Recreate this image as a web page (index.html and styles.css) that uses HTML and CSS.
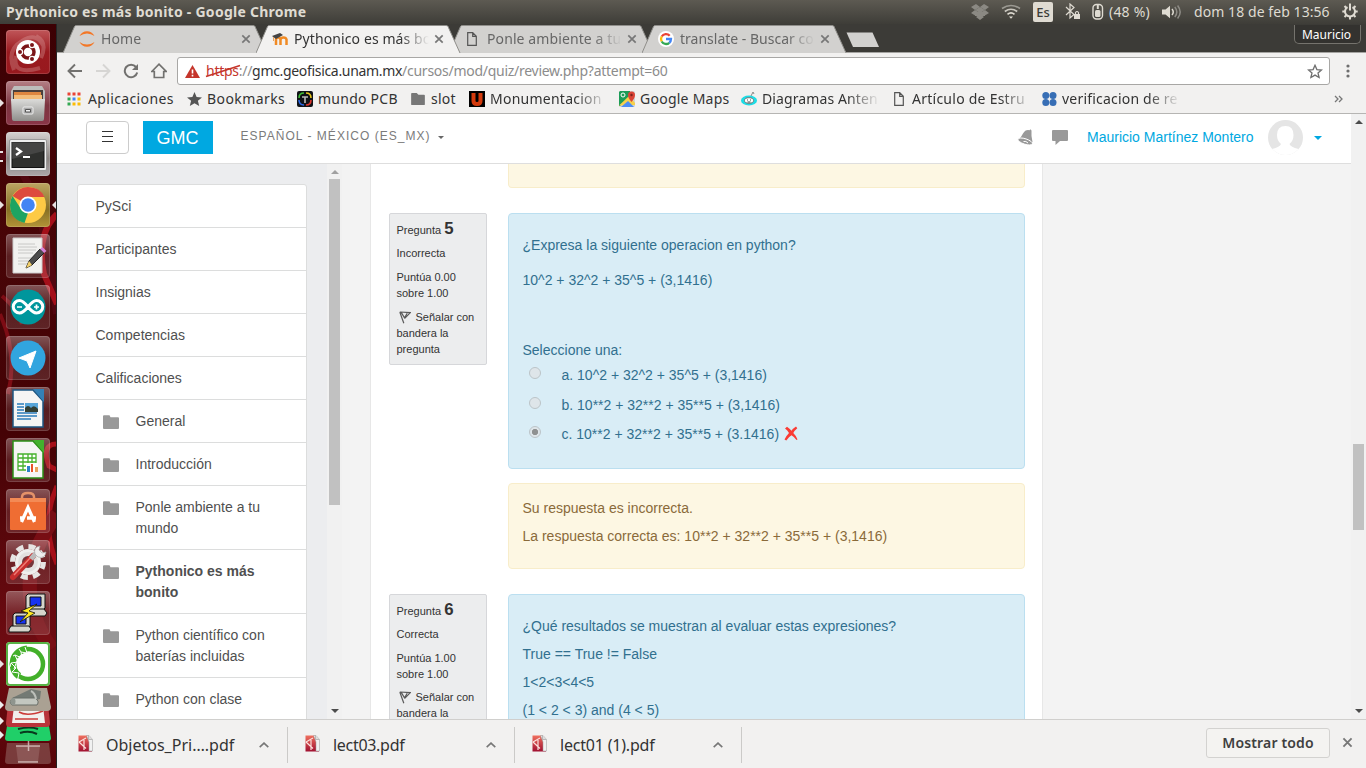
FILE: index.html
```html
<!DOCTYPE html>
<html lang="es">
<head>
<meta charset="utf-8">
<title>Pythonico es más bonito</title>
<link rel="stylesheet" href="styles.css">
</head>
<body>
<svg class="defs" width="0" height="0">
  <defs>
    <linearGradient id="metal" x1="0" y1="0" x2="0" y2="1"><stop offset="0" stop-color="#dcdcda"/><stop offset="1" stop-color="#8f8f8c"/></linearGradient>
    <linearGradient id="pdfred" x1="0" y1="0" x2="0" y2="1"><stop offset="0" stop-color="#f0705f"/><stop offset="1" stop-color="#a01030"/></linearGradient>
    <symbol id="close" viewBox="0 0 10 10"><path d="M1.3 1.3l7.4 7.4M8.7 1.3L1.300 8.700" stroke="currentColor" stroke-width="1.7"/></symbol>
    <symbol id="page" viewBox="0 0 10 14"><path d="M.7.7h5l3.600 3.600v9H.7zM5.700.7v3.600h3.600" fill="none" stroke="#555" stroke-width="1.200"/></symbol>
    <symbol id="folder" viewBox="0 0 16 14"><path d="M0 1.200Q0 .2 1 .2h5.500l1 2h7.500q1 0 1 1v9.800q0 1-1 1H1q-1 0-1-1z" fill="#999"/></symbol>
    <symbol id="chev" viewBox="0 0 10 6"><path d="M.7 5.200L5 1.100l4.300 4.100" fill="none" stroke="#777" stroke-width="1.600"/></symbol>
    <symbol id="pdf" viewBox="0 0 15 17"><path d="M.5.500h9.500l4 4v12H.5z" fill="url(#pdfred)"/><path d="M8.500.500h2.500l3.500 4v11.500H11V7z" fill="#f1f1f1" stroke="#999" stroke-width=".5"/><path d="M10.500.700v3.800h3.800" fill="#ddd" stroke="#888" stroke-width=".5"/><path d="M1 7L8 3M1 7l7 6.500M6 5v10" fill="none" stroke="#fbe0dc" stroke-width="1.200"/></symbol>
    <symbol id="flag" viewBox="0 0 12 13"><path d="M.8 1l4 11.200M.8 1L11.300 1.600 5.700 7.300M2.200 1.400L5.500 6.800 8.200 2.200" fill="none" stroke="#5a5a5a" stroke-width="1.200"/></symbol>
    <symbol id="tabshape" viewBox="0 0 205 28"><path d="M0 28L11.500 1.500Q12 .5 13.500.5h176.500q1.500 0 2 1L204 28z" fill="currentColor"/><path d="M0 28L11.500 1.500Q12 .5 13.500.5h176.500q1.500 0 2 1L204 28" fill="none" stroke="#8f8e8a" stroke-width="1"/></symbol>
  </defs>
</svg>

<header class="panel">
  <span class="panel-title">Pythonico es más bonito - Google Chrome</span>
  <div class="indicators">
    <svg class="ind-drop" width="18" height="16" viewBox="0 0 18 16" fill="#8b8983"><path d="M5 0l4 3-5 3-4-3zM13 0l5 3-4 3-5-3zM4 6l5 3-4 3-5-3zM14 6l4 3-5 3-4-3zM9 10l4 3-4 3-4-3z"/><path d="M4 6l5-3 5 3-5 3z"/><path d="M4 8h10v4H4z"/></svg>
    <svg class="ind-wifi" width="20" height="15" viewBox="0 0 20 15" fill="none" stroke-width="1.700"><path d="M1 4.500Q10-1.500 19 4.500" stroke="#9b9992"/><path d="M3.800 7.500Q10 3 16.200 7.500" stroke="#c9c6be"/><path d="M6.500 10.300Q10 7.500 13.500 10.300" stroke="#dfdbd2"/><path d="M8 12.500h4L10 14.800z" fill="#dfdbd2"/></svg>
    <span class="ind-lang">Es</span>
    <svg class="ind-bt" width="16" height="17" viewBox="0 0 16 17"><path d="M1 4l8 7.500-4 3.500V1l4 3.500L1 12" fill="none" stroke="#dfdbd2" stroke-width="1.200"/><path d="M9 11h6v5H9z" fill="#dfdbd2"/><path d="M10.500 11V9.500q1.500-2 3 0V11" fill="none" stroke="#dfdbd2" stroke-width="1.200"/></svg>
    <svg class="ind-bat" width="12" height="17" viewBox="0 0 12 17"><rect x="1" y="1.500" width="9.500" height="14.500" rx="3.500" fill="none" stroke="#dfdbd2" stroke-width="1.400"/><rect x="3" y="7" width="5.500" height="7" rx="1.500" fill="#dfdbd2"/><path d="M5.800 2v4" stroke="#dfdbd2" stroke-width="2"/></svg>
    <span class="ind-pct">(48 %)</span>
    <svg class="ind-vol" width="20" height="14" viewBox="0 0 20 14"><path d="M0 4.500h3.500L8 .8v12.400L3.500 9.500H0z" fill="#dfdbd2"/><path d="M10 4q2.500 3 0 6" fill="none" stroke="#dfdbd2" stroke-width="1.500"/><path d="M12.800 2q4 5 0 10M15.600.5q5.200 6.500 0 13" fill="none" stroke="#8e8c86" stroke-width="1.500"/></svg>
    <span class="ind-date">dom 18 de feb 13:56</span>
    <svg class="ind-gear" width="16" height="17" viewBox="0 0 16 17" fill="none" stroke="#dfdbd2"><path d="M5.500 4.200a5 5 0 1 0 5 0" stroke-width="2"/><path d="M8 .5v7M.3 8.500h3M12.700 8.500h3M2.500 3l2.200 2.200M13.500 3l-2.200 2.200M2.500 14l2-2M13.500 14l-2-2M8 13.500v3" stroke-width="2"/></svg>
  </div>
</header>

<div class="desktop">
  <nav class="launcher">
    <svg class="wall" width="57" height="744" viewBox="0 0 57 744"><g fill="none" stroke="#a50f18"><path d="M0 130Q40 140 57 290" stroke="#520710" stroke-width="8"/><path d="M57 190Q36 210 44 250L57 280" stroke="#a30f19" stroke-width="6"/><path d="M0 290Q18 330 8 370M2 272Q18 285 22 300" stroke="#7d0c14" stroke-width="4"/><path d="M57 420q-16 0-8 22l8 4M57 462Q40 500 57 540" stroke-width="5"/><path d="M57 490Q5 560 52 625" stroke="#780e14" stroke-width="14"/></g></svg>
    <div class="tile t-ubuntu"><svg viewBox="0 0 44 44"><path d="M8 40Q0 20 16 11Q30 2 37 15M10 26Q6 46 34 38M35 28Q42 12 30 6" fill="none" stroke="#e6b3b3" stroke-opacity=".3" stroke-width="4"/><circle cx="22" cy="22" r="12" fill="#fff"/><circle cx="22" cy="22" r="6" fill="none" stroke="#7b1518" stroke-width="3.500"/><g fill="#7b1518" stroke="#fff" stroke-width="1.200"><circle cx="14" cy="22" r="2.600"/><circle cx="26" cy="15" r="2.600"/><circle cx="26" cy="29" r="2.600"/></g></svg></div>
    <div class="tile t-files pip"><svg viewBox="0 0 44 44"><path d="M8 5h28l3 5v10H5V10z" fill="#bdbdbb"/><path d="M7 9h30v10H7z" fill="#4a403c"/><path d="M8 11h27v8H8z" fill="#de8740"/><path d="M8 14h28v5H8z" fill="#f3bd79"/><path d="M5 18h34l-1 20q0 2-2 2H8q-2 0-2-2z" fill="url(#metal)"/><rect x="17" y="26" width="10" height="7" rx="1" fill="#aaa" stroke="#eee"/><path d="M19.500 28.500h5v2.500h-5z" fill="#eee" stroke="#555"/></svg></div>
    <div class="tile t-term pip two"><svg viewBox="0 0 44 44"><rect x="3.500" y="7.500" width="37" height="31" rx="1.500" fill="#eee" stroke="#999"/><rect x="6" y="10.500" width="32" height="25" fill="#2f302e" stroke="#111"/><path d="M6 10h32v9L6 27z" fill="#666" opacity=".4"/><path d="M10 16l5 3.500-5 3.500M17 25h7" fill="none" stroke="#fff" stroke-width="2.200"/></svg></div>
    <div class="tile t-chrome pip"><svg viewBox="0 0 44 44"><circle cx="22" cy="22" r="18" fill="#fdca45"/><path d="M22 22L6.500 13Q13 4 22 4q12 0 16.500 10H22z" fill="#dd4b3e"/><path d="M6.500 13L15 26l7 4-3.500 10Q4 36 4 22q0-5 2.500-9z" fill="#1da462"/><circle cx="22" cy="22" r="8.500" fill="#fff"/><circle cx="22" cy="22" r="6.800" fill="#4285f4"/></svg></div>
    <div class="tile"><svg viewBox="0 0 44 44"><path d="M7 4h29v35H7z" fill="#f1f1ef" stroke="#ccc"/><path d="M12 10h17M12 13h19M12 16h18M12 19h15M12 24h17M12 27h14M12 30h12" stroke="#c8c8c6"/><path d="M23 27L34 15l4 4-12 12-6 3z" fill="#4c4c4c" stroke="#222"/><path d="M34 15l2.500-2 4 4-2.500 2z" fill="#d584d8"/><path d="M20 34l3-7 3 4z" fill="#f3d06a"/></svg></div>
    <div class="tile"><svg viewBox="0 0 44 44"><circle cx="22" cy="22" r="17.500" fill="#00969c"/><path d="M22 22Q17 15.500 13.500 15.500a6 6 0 0 0 0 12.500Q17 28 22 22Q27 15.500 30.500 15.500a6 6 0 0 1 0 12.500Q27 28 22 22z" fill="none" stroke="#fff" stroke-width="3"/><path d="M11 22h5M28 22h5M30.500 19.500v5" stroke="#fff" stroke-width="1.700"/></svg></div>
    <div class="tile"><svg viewBox="0 0 44 44"><circle cx="22" cy="22" r="17.500" fill="#31a5df"/><path d="M13 22l17-7-6 17-3-7z" fill="#fff" stroke="#fff" stroke-linejoin="round"/></svg></div>
    <div class="tile"><svg viewBox="0 0 44 44"><path d="M7 3h20l10 11v26H7z" fill="#f5f5f4" stroke="#1d5783" stroke-width="1.500"/><path d="M27 2h11v13z" fill="#3380b6"/><path d="M11 17h7M11 20h7M11 23h7M11 26h20M11 29h20M11 32h14" stroke="#2a7cbb" stroke-width="1.500"/><path d="M19 16h13v9H19z" fill="#57a5d8"/><path d="M19 25v-4q3-4 6 0 3-4 7 1v3z" fill="#333f33"/></svg></div>
    <div class="tile"><svg viewBox="0 0 44 44"><path d="M7 3h20l10 11v26H7z" fill="#f5f5f4" stroke="#2b9016" stroke-width="1.500"/><path d="M27 2h11v13z" fill="#43b12d"/><path d="M12 16h18v16H12zM12 20h18M12 24h18M12 28h18M17 16v16M22 16v16M26 16v16" fill="#fff" stroke="#45b12d" stroke-width="1.300"/><path d="M20 25h12v9H20z" fill="#fff"/><path d="M21 34v-6h3v6z" fill="#2b82c9"/><path d="M25 34v-8h2v8z" fill="#e8542b"/><path d="M29 34v-5h3v5z" fill="#e9a35d"/></svg></div>
    <div class="tile"><svg viewBox="0 0 44 44"><path d="M16 13V8q0-4 6-4t6 4v5" fill="none" stroke="#e49169" stroke-width="2.500"/><path d="M4 9h36v31q0 1-1 1H5q-1 0-1-1z" fill="#ef6d33"/><path d="M4 9h36v4H4z" fill="#f38a55"/><path d="M15.500 33L22 18.500 28.500 33M14 29h4.500M21 29h9" fill="none" stroke="#fff" stroke-width="3.300"/></svg></div>
    <div class="tile"><svg viewBox="0 0 44 44"><circle cx="22" cy="22" r="15.500" fill="none" stroke="#e6e5e3" stroke-width="5" stroke-dasharray="7 5.170"/><circle cx="22" cy="22" r="11.500" fill="#e2e1df" stroke="#efefed" stroke-width="3"/><circle cx="22" cy="22" r="6" fill="#76363a"/><path d="M7 37L27 16" stroke="#c62d2d" stroke-width="6" stroke-linecap="round"/><path d="M8 35L26 16" stroke="#ee7b74" stroke-width="1.500"/><path d="M25 19l5-6" stroke="#bbb" stroke-width="5"/><path d="M29 14q-2-7 5-8l-1 4 3 3 4-1q-1 7-8 5z" fill="#eee" stroke="#aaa" stroke-width=".7"/></svg></div>
    <div class="tile"><svg viewBox="0 0 44 44"><g fill="#d5d5cc" stroke="#111"><path d="M20 5l2-2h17v14l-2 2H20z"/><path d="M19 18h19l3 4-2 3H19z"/><path d="M7 24l2-2h15v13l-2 2H7z"/><path d="M5 35h18l2 3-2 3H3v-3z"/></g><path d="M24 6h11v9H24zM10 25h10v8H10z" fill="#1733f0" stroke="#111"/><path d="M31 13l-16 7 7 2-8 9 15-9-6-2z" fill="#ffe920" stroke="#111" stroke-width=".8"/></svg></div>
    <div class="tile t-white pip"><svg viewBox="0 0 44 44"><circle cx="22" cy="22" r="15" fill="none" stroke="#43b02a" stroke-width="4.500"/><path d="M21 7A15 15 0 0 0 13 34" fill="none" stroke="#43b02a" stroke-width="7"/><path d="M19 5l2 6-6-1 1 6-7-3 3 7-7 1 5 5-4 4 7 1-1 5M13 7l2 3M7 14l2-1M5 21l-1 4M12 16l-4 11" fill="none" stroke="#fff" stroke-width="1"/></svg></div>
    <svg class="folded" width="57" height="82" viewBox="0 0 57 82"><path d="M7 57h42l2 18q0 3-3 3H8q-3 0-3-3z" fill="#8c5b58" opacity=".65"/><path d="M16 60h24l-2 16H18z" fill="#d6bdb8" opacity=".2"/><path d="M16 60h24M18 76h20M28.500 55v10" fill="none" stroke="#f5e7e3" stroke-width="1.500" opacity=".65"/><path d="M8 34h40l3 18q0 3-3 3H8q-3 0-3-3z" fill="#20cf68"/><path d="M18 43q12-3 20 0M20 47q9-3 17 1" fill="none" stroke="#08391e" stroke-width="2"/><path d="M8 18h40l2 19q0 4-3 4H9q-3 0-3-4z" fill="#b9343b"/><path d="M14 20h29l2 17H12z" fill="#f1efed"/><path d="M19 26q8 5 24-1M15 33h23" fill="none" stroke="#cc3c39" stroke-width="1.500"/><path d="M9 2h38l4 19q0 4-4 4H9q-4 0-4-4z" fill="#aaa193"/><path d="M12 12L31 3l10 2-1 8-18 5-9-1z" fill="#737a74"/><path d="M13 12h22q5 3 2 7H12q-4-3 1-7z" fill="#c3c7c0" stroke="#686e68"/><ellipse cx="13" cy="15.500" rx="2.500" ry="3.500" fill="#8f958e"/><path d="M31 5q4 2 5 8" fill="none" stroke="#bcc0ba" stroke-width="2"/><g fill="#eee"><path d="M0 15l4 4-4 4zM0 31l4 4-4 4zM0 45l4 4-4 4z"/></g></svg>
  </nav>

  <main class="window">
    <div class="tabstrip">
      <div class="tab"><svg class="shape" width="205" height="28"><use href="#tabshape"/></svg>
        <svg class="fav" width="16" height="16" viewBox="0 0 16 16" fill="#f37726"><path d="M.5 5Q3 .2 8 .2T15.500 5Q12 2.500 8 2.500T.5 5zM.5 11Q3 15.800 8 15.800T15.500 11Q12 13.500 8 13.500T.5 11z"/></svg><span class="tab-title">Home</span><svg class="tab-x" width="10" height="10"><use href="#close"/></svg></div>
      <div class="tab active"><svg class="shape" width="205" height="28"><use href="#tabshape"/></svg>
        <svg class="fav" width="16" height="16" viewBox="0 0 16 16"><path d="M4 14V8.500q0-2 2-2t2.500 2V14M8.500 14V8.500q.5-2 3-2t3 2V14" fill="none" stroke="#f08a24" stroke-width="2.500"/><path d="M0 5l8-3 3 2-7 4z" fill="#444"/><path d="M1.500 6v4" stroke="#e9a25c"/></svg><span class="tab-title t2">Pythonico es más bo</span><svg class="tab-x" width="10" height="10"><use href="#close"/></svg></div>
      <div class="tab"><svg class="shape" width="205" height="28"><use href="#tabshape"/></svg>
        <svg class="fav" width="16" height="14"><use href="#page" width="10" height="14" x="2"/></svg><span class="tab-title t3">Ponle ambiente a tu</span><svg class="tab-x" width="10" height="10"><use href="#close"/></svg></div>
      <div class="tab"><svg class="shape" width="205" height="28"><use href="#tabshape"/></svg>
        <svg class="fav" width="16" height="16" viewBox="0 0 16 16"><circle cx="8" cy="8" r="8" fill="#fff"/><g fill="none" stroke-width="2.300"><path d="M11.700 4.700A5 5 0 0 0 3.700 5.500" stroke="#ea4335"/><path d="M3.700 5.500a5 5 0 0 0 0 5" stroke="#fbbc05"/><path d="M3.700 10.500a5 5 0 0 0 7.600 1.300" stroke="#34a853"/><path d="M11.300 11.800Q13 10.300 13 8H8" stroke="#4285f4"/></g></svg><span class="tab-title t4">translate - Buscar co</span><svg class="tab-x" width="10" height="10"><use href="#close"/></svg></div>
      <svg class="newtab" width="34" height="16" viewBox="0 0 34 16"><path d="M.5.500h26l6.500 14.500H7z" fill="#d2d1cf"/></svg>
      <span class="user-tag">Mauricio</span>
    </div>

    <div class="toolbar">
      <svg class="nav" width="16" height="16" viewBox="0 0 16 16"><path d="M15 8H2M8 1.500L1.500 8 8 14.500" fill="none" stroke="#72716f" stroke-width="1.900"/></svg>
      <svg class="nav" width="16" height="16" viewBox="0 0 16 16"><path d="M1 8h13M8 1.500L14.500 8 8 14.500" fill="none" stroke="#d6d5d3" stroke-width="1.900"/></svg>
      <svg class="nav" width="16" height="16" viewBox="0 0 16 16"><path d="M13 4A6.300 6.300 0 1 0 14.200 9.500" fill="none" stroke="#72716f" stroke-width="2"/><path d="M15 1v6H9z" fill="#72716f"/></svg>
      <svg class="nav" width="16" height="16" viewBox="0 0 16 16"><path d="M.8 8.500L8 1.200l7.200 7.300h-2.500v6H3.300v-6z" fill="none" stroke="#72716f" stroke-width="1.700"/></svg>
      <div class="omnibox">
        <svg width="15" height="13" viewBox="0 0 15 13"><path d="M7.500 0L15 13H0z" fill="#c5352b"/><path d="M7.500 4.500v4M7.500 9.700v1.700" stroke="#fff" stroke-width="1.600"/></svg>
        <span class="scheme">https<svg class="strike" width="36" height="14" viewBox="0 0 36 14"><path d="M1 12.500L35 1.500" stroke="#c5352b" stroke-width="1.600"/></svg></span><span class="slashes">://</span><span class="host">gmc.geofisica.unam.mx</span><span class="path">/cursos/mod/quiz/review.php?attempt=60</span>
        <svg class="star" width="16" height="15" viewBox="0 0 16 15"><path d="M8 1.300l1.900 4.300 4.600.4-3.500 3 1.100 4.500L8 11.100l-4.100 2.400L5 9 1.500 6l4.600-.4z" fill="none" stroke="#6e6e6e" stroke-width="1.300"/></svg>
      </div>
      <svg class="menu" width="4" height="14" viewBox="0 0 4 14" fill="#6e6e6e"><circle cx="2" cy="2" r="1.600"/><circle cx="2" cy="7" r="1.600"/><circle cx="2" cy="12" r="1.600"/></svg>
    </div>

    <div class="bookmarks">
      <div class="bm b1"><svg width="14" height="14" viewBox="0 0 14 14"><path d="M.5.500h3v3h-3zM5.500.500h3v3h-3zM10.500.500h3v3h-3z" fill="#ea4335"/><path d="M.5 5.500h3v3h-3z" fill="#34a853"/><path d="M5.500 5.500h3v3h-3z" fill="#4285f4"/><path d="M10.500 5.500h3v3h-3z" fill="#fbbc05"/><path d="M.5 10.500h3v3h-3z" fill="#34a853"/><path d="M5.500 10.500h3v3h-3zM10.500 10.500h3v3h-3z" fill="#fbbc05"/></svg><span>Aplicaciones</span></div>
      <div class="bm b2"><svg width="15" height="14" viewBox="0 0 15 14"><path d="M7.500 0l2.100 5 5.400.4-4.100 3.400 1.300 5.200-4.700-2.800L2.800 14l1.300-5.200L0 5.400 5.400 5z" fill="#555"/></svg><span>Bookmarks</span></div>
      <div class="bm b3"><svg width="16" height="16" viewBox="0 0 16 16"><rect width="16" height="16" rx="2" fill="#101216"/><g fill="none" stroke-width="1.600"><path d="M2 7Q2 2 7 2" stroke="#3fbd36"/><path d="M9 2q5 0 5 5" stroke="#e9c61d"/><path d="M14 9q0 5-5 5" stroke="#df372e"/><path d="M7 14q-5 0-5-5" stroke="#2a68e8"/></g><path d="M5 6h6M8 6v6" stroke="#bbb" stroke-width="1.600"/></svg><span>mundo PCB</span></div>
      <div class="bm b4"><svg width="14" height="12" viewBox="0 0 16 14"><path d="M0 1q0-1 1-1h5.500l2 2H15q1 0 1 1v10q0 1-1 1H1q-1 0-1-1z" fill="#777"/></svg><span>slot</span></div>
      <div class="bm b5 fade"><svg width="16" height="16" viewBox="0 0 16 16"><path d="M0 0h16v16H0z" fill="#000"/><path d="M4.500 2v8q0 3 3.500 3t3.500-3V2" fill="none" stroke="#d33a0c" stroke-width="4"/></svg><span>Monumentacion</span></div>
      <div class="bm b6"><svg width="16" height="16" viewBox="0 0 16 16"><rect width="16" height="16" rx="1.500" fill="#d4d4d4"/><path d="M1 0h10v6L1 15H0V1z" fill="#1c9c57"/><path d="M0 14.500L10 5l6 7v2z" fill="#f7d04a"/><path d="M2 16l7-6 6 6z" fill="#4b8df5"/><circle cx="4" cy="4" r="2" fill="none" stroke="#fff"/><path d="M9 4a3.500 3.500 0 0 1 7 0q0 3-3.500 7Q9 7 9 4z" fill="#db4437"/><circle cx="12.500" cy="4" r="1.200" fill="#7b231e"/></svg><span>Google Maps</span></div>
      <div class="bm b7 fade"><svg width="16" height="16" viewBox="0 0 16 16"><ellipse cx="8" cy="9.500" rx="8" ry="5" fill="#1ddce5"/><ellipse cx="8" cy="9.500" rx="4.500" ry="2.800" fill="#fff" stroke="#777"/><path d="M6 9h1M9 9h1M6.500 11h3" stroke="#444"/><path d="M10 5l2-4 1 2" fill="none" stroke="#888"/></svg><span>Diagramas Anten</span></div>
      <div class="bm b8 fade"><svg width="10" height="14"><use href="#page"/></svg><span>Artículo de Estru</span></div>
      <div class="bm b9 fade"><svg width="15" height="14" viewBox="0 0 15 14" fill="#376eb5"><circle cx="3.800" cy="3.600" r="3.500"/><circle cx="11" cy="3.600" r="3.500"/><circle cx="3.800" cy="10.400" r="3.500"/><circle cx="11" cy="10.400" r="3.500"/></svg><span>verificacion de re</span></div>
      <svg class="more" width="9" height="8" viewBox="0 0 9 8"><path d="M1 1l3 3-3 3M5 1l3 3-3 3" fill="none" stroke="#777" stroke-width="1.300"/></svg>
    </div>

    <div class="viewport">
      <div class="site">
        <div class="site-head">
          <div class="burger"><i></i><i></i><i></i></div>
          <div class="brand">GMC</div>
          <div class="lang">ESPAÑOL - MÉXICO (ES_MX)<b class="caret"></b></div>
          <svg class="bell" width="17" height="17" viewBox="0 0 17 17"><path d="M.8 10.800Q5 7.500 6 4.500 8.500.2 12.500 1.200l.8-.9 1.200 1.300q-.5 5 1 11.400-7 3-14.700-2.200z" fill="#999"/><ellipse cx="8.200" cy="12.500" rx="7.600" ry="2.700" transform="rotate(18 8.200 12.500)" fill="#999" stroke="#fff" stroke-width=".9"/><path d="M6.500 12.500q2.500-.8 4.500 1.500" stroke="#fff" fill="none"/></svg>
          <svg class="chat" width="16" height="15" viewBox="0 0 16 15"><path d="M1 0h14q1 0 1 1v9q0 1-1 1H8l-4.500 4V11H1q-1 0-1-1V1q0-1 1-1z" fill="#999"/></svg>
          <span class="who">Mauricio Martínez Montero</span>
          <svg class="avatar" width="35" height="35" viewBox="0 0 35 35"><clipPath id="av"><circle cx="17.500" cy="17.500" r="17.500"/></clipPath><g clip-path="url(#av)"><path d="M0 0h35v35H0z" fill="#e5e5e5"/><path d="M17.500 6q8 0 8 9 0 6-4 9 1 3 9 5v7H4v-7q8-2 9-5-4-3-4-9 0-9 8.500-9z" fill="#fff"/></g></svg>
          <b class="caret blue"></b>
        </div>
        <div class="site-body">
          <aside class="drawer">
            <ul class="list">
              <li>PySci</li><li>Participantes</li><li>Insignias</li><li>Competencias</li><li>Calificaciones</li>
              <li class="sub"><svg width="16" height="14"><use href="#folder"/></svg><span>General</span></li>
              <li class="sub"><svg width="16" height="14"><use href="#folder"/></svg><span>Introducción</span></li>
              <li class="sub"><svg width="16" height="14"><use href="#folder"/></svg><span>Ponle ambiente a tu mundo</span></li>
              <li class="sub current"><svg width="16" height="14"><use href="#folder"/></svg><span>Pythonico es más bonito</span></li>
              <li class="sub"><svg width="16" height="14"><use href="#folder"/></svg><span>Python científico con baterías incluidas</span></li>
              <li class="sub"><svg width="16" height="14"><use href="#folder"/></svg><span>Python con clase</span></li>
            </ul>
          </aside>
          <div class="sbar inner"><b class="up dim"></b><div class="thumb"></div><b class="down"></b></div>
          <section class="quiz">
            <div class="outcome tail"></div>
            <article class="que">
              <div class="info"><h3>Pregunta <b>5</b></h3><p>Incorrecta</p><p>Puntúa 0.00 sobre 1.00</p><p><svg class="flag" width="12" height="13"><use href="#flag"/></svg>Señalar con bandera la pregunta</p></div>
              <div class="content">
                <div class="formulation f5">
                  <p>¿Expresa la siguiente operacion en python?</p><p>10^2 + 32^2 + 35^5 + (3,1416)</p><p>&nbsp;</p>
                  <div class="prompt">Seleccione una:</div>
                  <div class="answer"><i class="radio"></i><span>a. 10^2 + 32^2 + 35^5 + (3,1416)</span></div>
                  <div class="answer"><i class="radio"></i><span>b. 10**2 + 32**2 + 35**5 + (3,1416)</span></div>
                  <div class="answer"><i class="radio on"></i><span>c. 10**2 + 32**2 + 35**5 + (3.1416)</span><svg class="wrong" width="14" height="15" viewBox="0 0 14 15"><path d="M1 2.500L3 .8q3 2.200 4.500 4Q9 2.500 12 .6l1.300 1.600Q10.500 4.500 9.300 7q2.700 2.500 4.200 6.500l-1 .5q-2-3-5-4.800Q4.500 11 2.300 14.400L.5 13.500Q2.500 9.500 5 7 3.500 4 1 2.500z" fill="#fa3b34"/></svg></div>
                </div>
                <div class="outcome"><div>Su respuesta es incorrecta.</div><div>La respuesta correcta es: 10**2 + 32**2 + 35**5 + (3,1416)</div></div>
              </div>
            </article>
            <article class="que">
              <div class="info"><h3>Pregunta <b>6</b></h3><p>Correcta</p><p>Puntúa 1.00 sobre 1.00</p><p class="tight"><svg class="flag" width="12" height="13"><use href="#flag"/></svg>Señalar con bandera la pregunta</p></div>
              <div class="content">
                <div class="formulation f6"><p>¿Qué resultados se muestran al evaluar estas expresiones?</p><p>True == True != False</p><p>1&lt;2&lt;3&lt;4&lt;5</p><p>(1 &lt; 2 &lt; 3) and (4 &lt; 5)</p></div>
              </div>
            </article>
          </section>
        </div>
      </div>
      <div class="sbar outer"><b class="up"></b><div class="thumb"></div><b class="down"></b></div>
    </div>

    <footer class="downloads">
      <div class="dl"><svg width="15" height="17"><use href="#pdf"/></svg><span class="d1">Objetos_Pri….pdf</span><svg class="chev" width="10" height="6"><use href="#chev"/></svg></div>
      <div class="dl"><svg width="15" height="17"><use href="#pdf"/></svg><span class="d2">lect03.pdf</span><svg class="chev" width="10" height="6"><use href="#chev"/></svg></div>
      <div class="dl"><svg width="15" height="17"><use href="#pdf"/></svg><span class="d3">lect01 (1).pdf</span><svg class="chev" width="10" height="6"><use href="#chev"/></svg></div>
      <button class="showall">Mostrar todo</button>
      <svg class="bar-x" width="11" height="11" viewBox="0 0 10 10"><use href="#close"/></svg>
    </footer>
  </main>
</div>
</body>
</html>
```
FILE: styles.css
```css
* { box-sizing: border-box; margin: 0; padding: 0; }
body { width: 1366px; height: 768px; overflow: hidden; display: flex; flex-direction: column; font-family: "Noto Sans", "Open Sans", sans-serif; font-size: 14px; color: #333; background: #3c3b37; }
svg { flex: none; display: block; }
.defs { position: absolute; }

/* top panel */
.panel { height: 24px; flex: none; display: flex; align-items: center; justify-content: space-between; padding: 0 8px 1px 6px; background: linear-gradient(#5d5a52, #3e3d38); color: #dfdbd2; white-space: nowrap; }
.panel-title { font-weight: 700; font-size: 14px; letter-spacing: .26px; }
.indicators { display: flex; align-items: center; width: 387px; font-size: 14px; }
.ind-wifi { margin-left: 12px; }
.ind-lang { margin-left: 12px; width: 20px; height: 20px; border-radius: 2px; background: #dfdbd2; color: #3c3b37; font-size: 13px; font-weight: 500; line-height: 20px; text-align: center; }
.ind-bt { margin-left: 12px; }
.ind-bat { margin-left: 11px; }
.ind-pct { margin-left: 5px; width: 42px; letter-spacing: .2px; }
.ind-vol { margin-left: 11px; }
.ind-date { margin-left: 12px; width: 136px; letter-spacing: .07px; }
.ind-gear { margin-left: 12px; }

.desktop { flex: 1; display: flex; min-height: 0; }

/* launcher */
.launcher { position: relative; width: 57px; flex: none; padding: 6px 0 0 6px; display: flex; flex-direction: column; gap: 7px; background: linear-gradient(#3c0003, #480507 30%, #440205 55%, #700c12 85%, #560408); border-right: 1px solid #242424; overflow: hidden; }
.wall { position: absolute; left: 0; top: 0; }
.tile { position: relative; flex: none; width: 44px; height: 44px; border-radius: 4px; background: linear-gradient(rgba(255,255,255,.32), rgba(255,255,255,.1) 50%, rgba(255,255,255,.13)); box-shadow: inset 0 0 0 1px rgba(255,255,255,.14); }
.tile svg { width: 44px; height: 44px; }
.t-ubuntu { background: linear-gradient(#c05659, #9a1a1f 50%, #98191e); }
.t-files { background: linear-gradient(#b58086, #7c3440 55%, #8a3547); }
.t-term { background: linear-gradient(#d5d2d1, #8b8481 60%, #aca6a8); }
.t-chrome { background: linear-gradient(#bca562, #877025 60%, #b29437); }
.t-white { background: #fff; box-shadow: inset 0 0 0 2px #58b346; }
.pip::before { content: ""; position: absolute; left: -6px; top: 18px; border: 4px solid transparent; border-left-color: #e8e2e2; border-right: 0; }
.pip.two::before { width: 3px; height: 7px; top: 19px; border: solid #e8e2e2; border-width: 2px 0; }
.t-chrome::after { content: ""; position: absolute; right: -6px; top: 18px; border: 4px solid transparent; border-right-color: #e8e2e2; border-left: 0; }
.folded { position: relative; margin: -7px 0 0 -6px; }

/* browser window */
.window { flex: 1; min-width: 0; display: flex; flex-direction: column; background: #f2f1f0; }
.tabstrip { height: 29px; flex: none; display: flex; padding: 1px 5px 0 6px; background: #3c3b37; border-bottom: 1px solid #a5a4a1; }
.tab { position: relative; flex: none; width: 193px; height: 28px; display: flex; align-items: center; padding-left: 16px; color: #d2d1cf; }
.tab.active { color: #f2f1f0; z-index: 2; }
.shape { position: absolute; left: 0; top: 0; }
.tab > .fav, .tab > .tab-title, .tab > .tab-x { position: relative; }
.tab-title { margin: 0 0 2px 6px; width: 140px; white-space: nowrap; color: #666; font-size: 14px; letter-spacing: .1px; -webkit-mask-image: linear-gradient(90deg, #000 106px, transparent 135px); mask-image: linear-gradient(90deg, #000 106px, transparent 135px); }
.t4 { letter-spacing: 0; }
.active .tab-title { color: #333; }
.tab-x { margin-left: 0; color: #777; }
.newtab { margin: 7px 0 0 10.500px; }
.user-tag { margin: 0 0 0 auto; width: 67px; height: 19px; padding-right: 2px; border: 1px solid #75736d; border-top: 0; border-radius: 0 0 5px 5px; color: #fff; font-size: 12px; line-height: 20px; text-align: center; background: #33322f; }
.toolbar { height: 36px; flex: none; display: flex; align-items: center; padding-left: 10px; }
.nav { margin-right: 12px; }
.omnibox { width: 1153px; height: 28px; margin-left: -2px; border: 1px solid #a8a7a5; border-radius: 3px; background: #fff; display: flex; align-items: center; padding-left: 7px; white-space: nowrap; font-size: 14px; letter-spacing: -.27px; }
.omnibox span { padding-bottom: 1px; }
.scheme { position: relative; margin-left: 6px; color: #c5352b; }
.strike { position: absolute; left: -1px; top: 3px; }
.slashes, .path { color: #8c8c8c; }
.host { color: #333; letter-spacing: -.32px; }
.star { margin: 0 6px 0 auto; }
.menu { margin-left: 16px; }
.bookmarks { height: 25px; flex: none; display: flex; align-items: center; padding: 0 0 5px 10px; border-bottom: 1px solid #b6b5b3; }
.bm { display: flex; align-items: center; gap: 5px; white-space: nowrap; color: #333; flex: none; margin-right: 12px; letter-spacing: .25px; }
.bm span { margin-bottom: 1px; }
.b1 { width: 108px; gap: 7px; letter-spacing: .36px; } .b2 { width: 98px; letter-spacing: .42px; } .b3 { width: 102px; } .b4 { width: 46px; gap: 6px; }
.b5 { width: 138px; } .b6 { width: 110px; } .b7 { width: 141px; letter-spacing: .1px; } .b8 { width: 136px; gap: 8px; letter-spacing: .25px; } .b9 { width: 138px; letter-spacing: .2px; }
.fade { -webkit-mask-image: linear-gradient(90deg, #000 106px, transparent 139px); mask-image: linear-gradient(90deg, #000 106px, transparent 139px); }
.more { margin: 0 23px 0 auto; }

/* page */
.viewport { flex: 1; min-height: 0; display: flex; background: #f3f3f3; font-family: "Liberation Sans", Arial, sans-serif; line-height: 21px; }
.site { flex: 1; min-width: 0; display: flex; flex-direction: column; }
.site-head { height: 50px; flex: none; display: flex; align-items: center; padding: 0 29px 3px; background: #fff; border-bottom: 1px solid #dedede; }
.burger { width: 43px; height: 33px; border: 1px solid #ccc; border-radius: 4px; display: flex; flex-direction: column; align-items: center; justify-content: center; gap: 4px; padding: 0 1px 1px 0; }
.burger i { width: 11px; height: 1px; background: #333; }
.brand { margin-left: 14px; width: 70px; height: 33px; padding-right: 1px; background: #00a8e1; color: #fff; font-size: 18px; line-height: 34px; text-align: center; }
.lang { margin-left: 27.500px; padding-bottom: 2px; font-size: 12px; letter-spacing: 1.030px; color: #7b7b7b; display: flex; align-items: center; }
.caret { border: 3.500px solid transparent; border-top-color: #666; border-bottom: 0; margin: 2px 0 0 7px; }
.caret.blue { border-width: 4px 4.500px 0; border-top-color: #00a8e1; margin-left: 11px; }
.bell { margin-left: auto; }
.chat { margin-left: 18px; }
.who { margin-left: 19px; width: 167px; color: #00a8e1; white-space: nowrap; }
.avatar { margin-left: 14px; }
.site-body { flex: 1; min-height: 0; display: flex; overflow: hidden; }
.drawer { width: 270px; flex: none; background: #ecedef; padding: 20px 20px 0; }
.list { list-style: none; border: 1px solid #dcdddd; border-radius: 3px; background: #fff; color: #4f4f4f; }
.list li { padding: 11px 18px 10px 17.500px; border-bottom: 1px solid #dcdddd; min-height: 43px; }
.list li.sub { display: flex; padding-left: 25px; }
.sub svg { margin: 4px 16.500px 0 0; }
.list .current { font-weight: 700; }
.sbar { background: #f1f1f1; flex: none; width: 15px; display: flex; flex-direction: column; align-items: center; }
.sbar .thumb { background: #c1c1c1; width: 11px; }
.up { border: 4px solid transparent; border-top: 0; border-bottom-color: #4c4c4c; }
.up.dim { border-bottom-color: #a0a0a0; }
.down { border: 4px solid transparent; border-bottom: 0; border-top-color: #4c4c4c; margin: auto 0 6px; }
.inner .up { margin-top: 6px; }
.inner .thumb { margin-top: 5px; height: 326px; }
.outer .up { margin-top: 6px; }
.outer .thumb { margin-top: 320px; height: 86px; }
.quiz { width: 673px; flex: none; margin-left: 28px; background: #fff; border: solid #e7e7e7; border-width: 0 1px; padding: 0 17px 0 18px; }
.outcome { border: 1px solid #f8edca; border-radius: 4px; background: #fdf7e3; color: #8a6a3a; padding: 14px 13.500px 0; height: 86px; }
.outcome div + div { margin-top: 7px; }
.outcome.tail { height: 24px; margin-left: 119px; border-top: 0; border-radius: 0 0 4px 4px; }
.que { display: flex; align-items: flex-start; gap: 21px; margin-top: 25px; }
.info { width: 98px; flex: none; height: 152px; padding: 6px 6px 0 6.500px; border: 1px solid #d6d7da; border-radius: 2px; background: #ecedee; color: #333; font-size: 11px; line-height: 16px; }
.info h3 { font-weight: 400; font-size: 11px; line-height: 20px; height: 18px; margin-bottom: 7px; }
.info h3 b { font-size: 16.800px; line-height: 18px; }
.info p { margin-bottom: 8px; }
.info p.tight { margin-top: -1px; }
.flag { display: inline-block; margin: 0 5px 0 2px; vertical-align: -3px; }
.content { flex: 1; }
.formulation { border: 1px solid #bbdff0; border-radius: 4px; background: #d9edf6; color: #31708f; padding: 21px 13.500px 0; }
.f5 { height: 256px; margin-bottom: 14px; }
.f5 p { margin-bottom: 14px; }
.f6 { height: 200px; }
.f6 p { margin-bottom: 7px; }
.prompt { margin-bottom: 4px; }
.answer { display: flex; height: 29.500px; }
.radio { width: 12px; height: 12px; margin: 2.400px 20.500px 0 6.500px; border: 1px solid #bcc4c8; border-radius: 50%; background: #dee5e9; flex: none; }
.radio.on { margin-top: 2px; background: radial-gradient(#8f9191 0 2.800px, #dee5e9 3.400px); }
.wrong { margin: 2px 0 0 5px; }

/* downloads shelf */
.downloads { height: 49px; flex: none; border-top: 1px solid #d0cfcd; display: flex; align-items: center; padding-left: 4px; background: #f2f1f0; }
.dl { width: 227px; height: 36px; margin-top: 1px; border-right: 1px solid #cbcac8; display: flex; align-items: center; padding: 0 18px 0 17px; font-size: 16px; white-space: nowrap; }
.dl > svg:first-child { margin-top: -3px; }
.dl > span { margin-left: 13px; color: #333; }
.d2 { letter-spacing: -.3px; }
.d3 { letter-spacing: -.2px; }
.chev { margin-left: auto; }
.showall { margin: 0 0 2px auto; width: 124px; height: 30px; padding-bottom: 2px; border: 1px solid #d3d2d0; border-radius: 3px; background: #f4f3f1; font: 600 14px "Noto Sans", sans-serif; letter-spacing: .15px; color: #3f3f3f; }
.bar-x { margin: 0 13px 3px 12px; color: #777; }
```
